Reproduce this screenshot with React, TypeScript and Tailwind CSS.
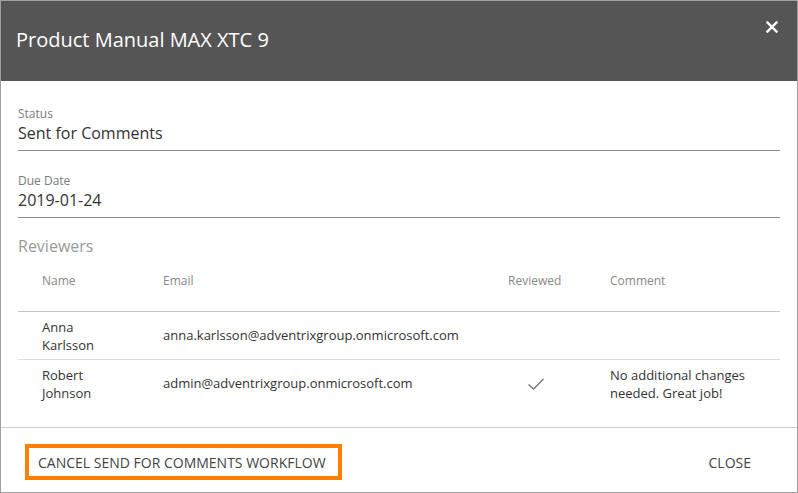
import React from "react";

const reviewers = [
  { name: ["Anna", "Karlsson"], email: "anna.karlsson@adventrixgroup.onmicrosoft.com", reviewed: false, comment: "" },
  { name: ["Robert", "Johnson"], email: "admin@adventrixgroup.onmicrosoft.com", reviewed: true, comment: "No additional changes needed. Great job!" },
];

const Field = ({ label, value }: { label: string; value: string }) => (
  <div className="border-b border-[#8c8c8c] pb-[5px]">
    <div className="text-[12px] leading-[14px] text-[#7a7a7a]">{label}</div>
    <div className="text-[16px] leading-[24px] text-[#333]">{value}</div>
  </div>
);

const App = () => {
  return (
    <div className="w-[798px] h-[493px] border border-[#a0a0a0] bg-white flex flex-col font-['Open_Sans',sans-serif] overflow-hidden">
      {/* header */}
      <div className="h-[80px] shrink-0 bg-[#555555] flex items-center justify-between pl-[15px] pr-[19px]">
        <div className="text-[20px] text-white pb-[2px]">Product Manual MAX XTC 9</div>
        <svg width="12" height="12" viewBox="0 0 12 12" className="mb-[28px]">
          <path d="M1.5 1.5 L10.5 10.5 M10.5 1.5 L1.5 10.5" stroke="white" strokeWidth="2.4" strokeLinecap="square" />
        </svg>
      </div>

      {/* body */}
      <div className="flex-1 px-[17px] pt-[26px]">
        <Field label="Status" value="Sent for Comments" />
        <div className="h-[23px]" />
        <Field label="Due Date" value="2019-01-24" />

        <div className="mt-[18px] text-[16px] leading-[20px] text-[#999]">Reviewers</div>

        <div className="grid grid-cols-[121px_345px_102px_1fr] text-[13px] text-[#333]">
          {/* table header */}
          <div className="col-span-4 grid grid-cols-subgrid h-[56px] pt-[17px] border-b border-[#c4c4c4] text-[12px] leading-[16px] text-[#888]">
            <div className="pl-6">Name</div>
            <div className="pl-6">Email</div>
            <div className="pl-6">Reviewed</div>
            <div className="pl-6">Comment</div>
          </div>
          {reviewers.map((r, i) => (
            <div
              key={r.email}
              className={`col-span-4 grid grid-cols-subgrid items-center h-[48px] ${i === 0 ? "border-b border-[#dcdcdc]" : ""}`}
            >
              <div className="pl-6 leading-[18px]">
                <div>{r.name[0]}</div>
                <div>{r.name[1]}</div>
              </div>
              <div className="pl-6">{r.email}</div>
              <div className="flex justify-center pl-[2px]">
                {r.reviewed && (
                  <svg width="18" height="14" viewBox="0 0 18 14">
                    <path d="M1.5 7.5 L6.5 12 L16.5 2" fill="none" stroke="#777" strokeWidth="1.4" />
                  </svg>
                )}
              </div>
              <div className="pl-6 pr-4 leading-[18px]">{r.comment}</div>
            </div>
          ))}
        </div>
      </div>

      {/* footer */}
      <div className="h-[65px] shrink-0 border-t border-[#d0d0d0] flex items-center justify-between pl-[24px] pr-[46px]">
        <button className="h-[36px] border-4 border-[#ff8000] pl-[9px] pr-[12px] text-[14px] text-[#444] mt-[4px]">
          CANCEL SEND FOR COMMENTS WORKFLOW
        </button>
        <button className="text-[14px] text-[#444] mt-[4px]">CLOSE</button>
      </div>
    </div>
  );
};

export default App;
